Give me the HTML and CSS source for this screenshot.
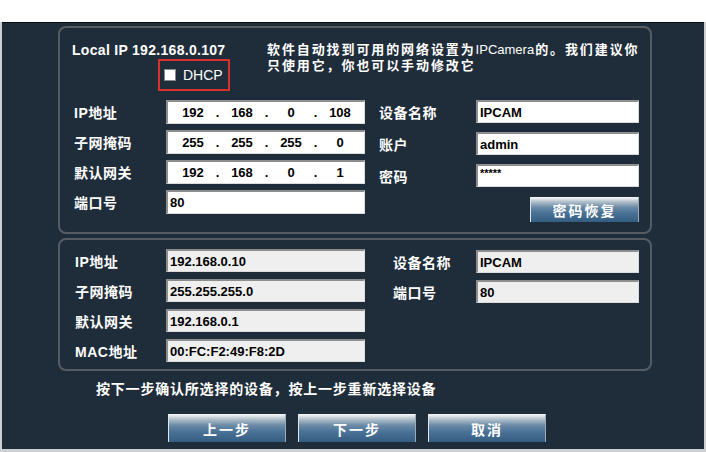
FILE: index.html
```html
<!DOCTYPE html>
<html lang="zh-CN">
<head>
<meta charset="utf-8">
<title>IPCamera 网络设置</title>
<link rel="stylesheet" href="styles.css">
</head>
<body>
<div class="topbar"></div>
<div class="frame">
  <div class="window">
    <section class="panel panel-top">
      <div class="head">
        <div class="head-left">
          <div class="local-ip">Local IP 192.168.0.107</div>
          <div class="dhcp"><span class="check"></span><span class="dhcp-text">DHCP</span></div>
        </div>
        <div class="note">
          <div class="note-line">软件自动找到可用的网络设置为<span class="latin">IPCamera</span>的。我们建议你</div>
          <div class="note-line">只使用它，你也可以手动修改它</div>
        </div>
      </div>
      <div class="form">
        <div class="grid grid-left">
          <span class="lbl">IP地址</span>
          <div class="field ip"><span>192</span><i>.</i><span>168</span><i>.</i><span>0</span><i>.</i><span>108</span></div>
          <span class="lbl">子网掩码</span>
          <div class="field ip"><span>255</span><i>.</i><span>255</span><i>.</i><span>255</span><i>.</i><span>0</span></div>
          <span class="lbl">默认网关</span>
          <div class="field ip"><span>192</span><i>.</i><span>168</span><i>.</i><span>0</span><i>.</i><span>1</span></div>
          <span class="lbl">端口号</span>
          <div class="field">80</div>
        </div>
        <div class="grid grid-right">
          <span class="lbl">设备名称</span>
          <div class="field">IPCAM</div>
          <span class="lbl">账户</span>
          <div class="field">admin</div>
          <span class="lbl">密码</span>
          <div class="field pwd">*****</div>
          <button class="btn btn-reset">密码恢复</button>
        </div>
      </div>
    </section>

    <section class="panel panel-bottom">
      <div class="form form-bottom">
        <div class="grid grid-bl">
          <span class="lbl">IP地址</span>
          <div class="field ro">192.168.0.10</div>
          <span class="lbl">子网掩码</span>
          <div class="field ro">255.255.255.0</div>
          <span class="lbl">默认网关</span>
          <div class="field ro">192.168.0.1</div>
          <span class="lbl">MAC地址</span>
          <div class="field ro">00:FC:F2:49:F8:2D</div>
        </div>
        <div class="grid grid-br">
          <span class="lbl">设备名称</span>
          <div class="field ro">IPCAM</div>
          <span class="lbl">端口号</span>
          <div class="field ro">80</div>
        </div>
      </div>
    </section>

    <p class="hint">按下一步确认所选择的设备，按上一步重新选择设备</p>

    <div class="actions">
      <button class="btn btn-nav">上一步</button>
      <button class="btn btn-nav">下一步</button>
      <button class="btn btn-nav">取消</button>
    </div>
  </div>
</div>
</body>
</html>
```

FILE: styles.css
```css
html, body {
  margin: 0;
  padding: 0;
  background: #ffffff;
}

body {
  width: 706px;
  height: 452px;
  overflow: hidden;
  font-family: "Liberation Sans", "Noto Sans CJK SC", sans-serif;
  color: #ffffff;
}

.topbar {
  height: 22px;
  background: #ffffff;
}

.frame {
  height: 430px;
  box-sizing: border-box;
  padding: 0 2px 3px 2px;
  background: #cdcfd1;
}

.window {
  height: 427px;
  box-sizing: border-box;
  background: #1f2d3a;
  border-top: 1px solid #0a0f14;
  padding-top: 3px;
  padding-left: 56px;
}

.panel {
  width: 594px;
  box-sizing: border-box;
  border: 2px solid #575c62;
  border-radius: 8px;
}

.panel-top {
  height: 208px;
}

.head {
  display: flex;
  padding-top: 14px;
}

.head-left {
  width: 207px;
  box-sizing: border-box;
  padding-left: 12px;
}

.local-ip {
  font-size: 14px;
  font-weight: 700;
  line-height: 16px;
  letter-spacing: 0.3px;
  white-space: nowrap;
}

.dhcp {
  display: flex;
  align-items: center;
  gap: 7px;
  width: 72px;
  height: 32px;
  box-sizing: border-box;
  margin: 1px 0 0 86px;
  padding-left: 4px;
  border: 2px solid #d8312e;
}

.check {
  width: 12px;
  height: 12px;
  box-sizing: border-box;
  background: #ffffff;
  border: 1px solid #8a8a8a;
}

.dhcp-text {
  font-size: 14px;
  line-height: 16px;
}

.note {
  font-family: "Liberation Sans", "Noto Sans CJK SC", sans-serif;
  font-size: 13px;
  font-weight: 700;
  letter-spacing: 1.9px;
  white-space: nowrap;
}

.note-line {
  height: 16px;
  line-height: 16px;
}

.note .latin {
  font-family: "Liberation Sans", sans-serif;
  font-size: 13px;
  font-weight: 400;
  letter-spacing: 0;
  margin-right: 1px;
}

.form {
  display: flex;
  padding-left: 14px;
  margin-top: 9px;
}

.grid {
  display: grid;
  align-items: center;
}

.grid-left {
  grid-template-columns: 92px 199px;
  grid-auto-rows: 24px;
  row-gap: 6px;
}

.grid-right {
  margin-left: 14px;
  grid-template-columns: 97px 163px;
  grid-template-rows: 23px 23px 23px 25px;
  row-gap: 9px;
}

.lbl {
  font-family: "Liberation Sans", "Noto Sans CJK SC", sans-serif;
  font-size: 14px;
  font-weight: 700;
  letter-spacing: 0.5px;
  white-space: nowrap;
}

.field {
  height: 100%;
  box-sizing: border-box;
  display: flex;
  align-items: center;
  padding-left: 2px;
  background: #ffffff;
  border-style: solid;
  border-width: 2px 1px 1px 2px;
  border-color: #8e8e8e #dcdcdc #dcdcdc #8e8e8e;
  color: #000000;
  font-size: 13px;
  font-weight: 700;
  white-space: nowrap;
}

.field.ip {
  padding-left: 5px;
}

.field.ip span {
  width: 40px;
  text-align: center;
}

.field.ip i {
  width: 9px;
  font-style: normal;
  text-align: center;
}

.field.pwd {
  align-items: flex-start;
  font-size: 11px;
  line-height: 11px;
  padding-top: 2px;
}

.field.ro {
  background: #efefef;
}

.btn {
  box-sizing: border-box;
  padding: 0;
  margin: 0;
  font-family: "Noto Sans CJK SC", sans-serif;
  font-size: 14px;
  font-weight: 700;
  color: #ffffff;
  letter-spacing: 2px;
  border-style: solid;
  border-width: 1px 1px 0 1px;
  border-color: #f2f5f8 #9aaab8 #2a4f70 #dfe6ec;
  background: linear-gradient(to bottom, #eef1f4 0%, #b7c4cf 14%, #6b8ba7 38%, #4a7296 62%, #345d82 100%);
}

.btn-reset {
  grid-column: 1 / -1;
  justify-self: end;
  width: 109px;
  height: 25px;
  margin-top: 1px;
}

.panel-bottom {
  height: 133px;
  margin-top: 4px;
}

.form-bottom {
  padding-left: 15px;
  margin-top: 0;
  padding-top: 9px;
}

.grid-bl {
  grid-template-columns: 91px 199px;
  grid-auto-rows: 23px;
  row-gap: 7px;
}

.grid-br {
  margin-left: 28px;
  align-self: start;
  grid-template-columns: 83px 163px;
  grid-auto-rows: 23px;
  row-gap: 7px;
  margin-top: 1px;
}

.hint {
  margin: 9px 0 0 38px;
  font-family: "Noto Sans CJK SC", sans-serif;
  font-size: 14px;
  font-weight: 700;
  line-height: 16px;
  letter-spacing: 0.8px;
  white-space: nowrap;
}

.actions {
  display: flex;
  gap: 12px;
  margin: 18px 0 0 110px;
}

.btn-nav {
  width: 118px;
  height: 28px;
}
```
